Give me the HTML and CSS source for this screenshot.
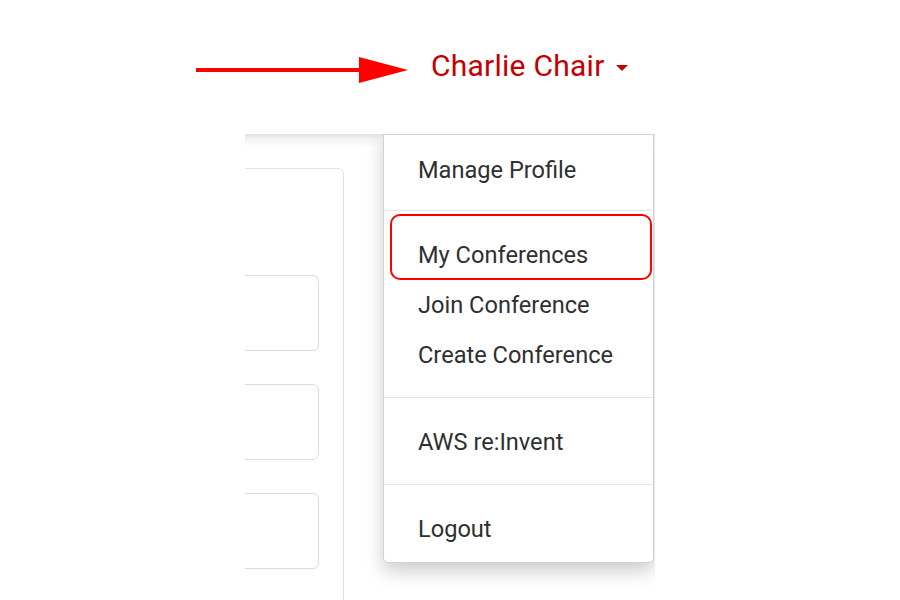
FILE: index.html
```html
<!DOCTYPE html>
<html>
<head>
<meta charset="utf-8">
<link rel="stylesheet" href="styles.css">
</head>
<body>
<header class="top">
  <svg class="arrow" width="212" height="26" viewBox="0 0 212 26">
    <rect x="0" y="11" width="166" height="4" fill="#ff0000"/>
    <polygon points="163,0 212,13 163,26" fill="#ff0000"/>
  </svg>
  <div class="user">
    <span class="name">Charlie Chair</span>
    <span class="caret"></span>
  </div>
</header>
<section class="shot">
  <div class="navshadow"></div>
  <div class="card">
    <div class="field"></div>
    <div class="field"></div>
    <div class="field"></div>
  </div>
  <nav class="menu">
    <a class="item">Manage Profile</a>
    <div class="divider first"></div>
    <a class="item">My Conferences</a>
    <a class="item">Join Conference</a>
    <a class="item">Create Conference</a>
    <div class="divider"></div>
    <a class="item">AWS re:Invent</a>
    <div class="divider"></div>
    <a class="item">Logout</a>
  </nav>
  <div class="highlight"></div>
</section>
</body>
</html>
```
FILE: styles.css
```css
html, body {
  margin: 0;
  padding: 0;
  background: #ffffff;
  font-family: Roboto, "Liberation Sans", sans-serif;
  overflow: hidden;
}

.top {
  display: flex;
  align-items: flex-start;
  padding: 49px 0 0 196px;
  height: 34px;
}

.arrow {
  display: block;
  margin-top: 8px;
  flex: none;
}

.user {
  display: flex;
  align-items: center;
  margin-left: 23px;
  height: 34px;
}

.name {
  font-size: 30px;
  line-height: 34px;
  color: #c40000;
  letter-spacing: 0.25px;
}

.caret {
  width: 0;
  height: 0;
  border-left: 6px solid transparent;
  border-right: 6px solid transparent;
  border-top: 6px solid #c40000;
  margin-left: 11px;
  margin-top: 3px;
}

.shot {
  position: relative;
  margin: 51px 0 0 245px;
  width: 410px;
  height: 466px;
  overflow: hidden;
  background: #ffffff;
}

.navshadow {
  height: 14px;
  background: linear-gradient(#e3e3e3, #f4f4f4 40%, #ffffff);
}

.card {
  margin: 20px 0 0 -101px;
  width: 200px;
  height: 600px;
  box-sizing: border-box;
  border: 1px solid #e3e3e3;
  border-radius: 6px;
  padding: 106px 24px 0 0;
  display: flex;
  flex-direction: column;
  align-items: flex-end;
  gap: 33px;
}

.field {
  width: 160px;
  height: 76px;
  box-sizing: border-box;
  border: 1px solid #dcdcdc;
  border-radius: 6px;
}

.menu {
  position: absolute;
  left: 138px;
  top: 0;
  width: 271px;
  box-sizing: border-box;
  background: #ffffff;
  border: 1px solid #d2d2d2;
  border-radius: 0 0 5px 5px;
  padding: 10px 0 8px;
  box-shadow: 0 8px 18px rgba(0, 0, 0, 0.2);
  display: flex;
  flex-direction: column;
}

.item {
  display: block;
  height: 50px;
  line-height: 50px;
  padding-left: 34px;
  font-size: 23.6px;
  color: #303030;
  white-space: nowrap;
}

.divider {
  height: 1px;
  background: #e6e6e6;
  margin: 17px 0 19px;
}

.divider.first {
  margin: 15px 0 19px;
}

.highlight {
  position: absolute;
  left: 145px;
  top: 80px;
  width: 262px;
  height: 66px;
  box-sizing: border-box;
  border: 2.5px solid #ff0000;
  border-radius: 10px;
}
```
